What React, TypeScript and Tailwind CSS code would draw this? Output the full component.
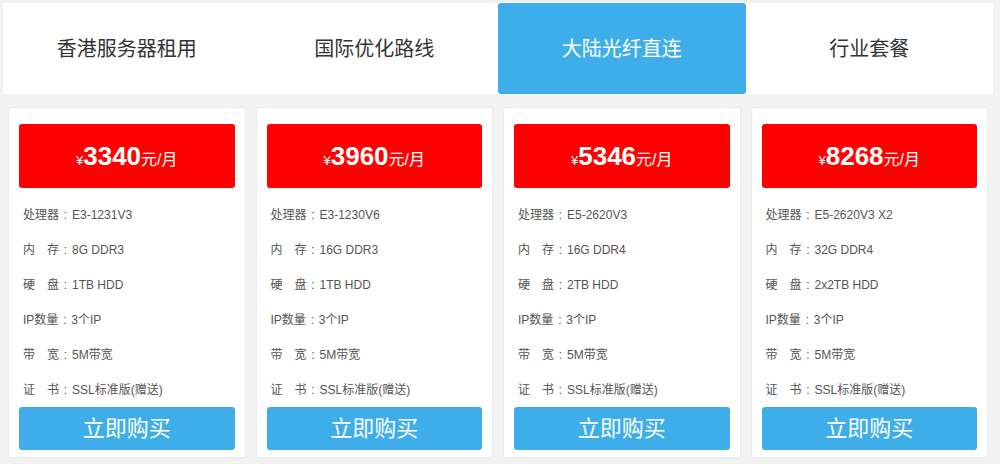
import React from "react";

const tabs = ["香港服务器租用", "国际优化路线", "大陆光纤直连", "行业套餐"];

const plans = [
  { price: "3340", cpu: "E3-1231V3", ram: "8G DDR3", disk: "1TB HDD" },
  { price: "3960", cpu: "E3-1230V6", ram: "16G DDR3", disk: "1TB HDD" },
  { price: "5346", cpu: "E5-2620V3", ram: "16G DDR4", disk: "2TB HDD" },
  { price: "8268", cpu: "E5-2620V3 X2", ram: "32G DDR4", disk: "2x2TB HDD" },
];

const font = {
  fontFamily: '"Liberation Sans", "Noto Sans CJK SC", sans-serif',
};

function Spec({ label, value }: { label: string; value: string }) {
  return (
    <li className="flex h-[35px] items-center pl-[4px]">
      <span>{label}</span>
      <span className="w-[13px] text-center">:</span>
      <span>{value}</span>
    </li>
  );
}

export default function App() {
  return (
    <div className="h-[464px] w-[1000px] overflow-hidden bg-[#f2f2f2] pt-[3px]" style={font}>
      {/* Tabs */}
      <div className="mx-[3px] grid h-[91px] w-[990px] grid-cols-4 bg-white">
        {tabs.map((t, i) => (
          <div
            key={t}
            className={
              i === 2
                ? "flex items-center justify-center rounded-[3px] bg-[#3eaeea] text-[20px] text-white"
                : "flex items-center justify-center text-[20px] text-[#333]"
            }
          >
            {t}
          </div>
        ))}
      </div>

      {/* Plans */}
      <div className="mx-[3px] mt-[13px] grid w-[990px] grid-cols-4">
        {plans.map((p) => (
          <div key={p.price} className="px-[5px]">
            <div className="rounded-[3px] border border-[#ebebeb] bg-white px-[10px] pt-[16px] pb-[7px]">
              <div className="flex h-[64px] items-center justify-center rounded-[3px] bg-[#ff0000] text-white">
                <div className="flex items-baseline">
                  <span className="text-[13px]">¥</span>
                  <span className="text-[26px] font-bold">{p.price}</span>
                  <span className="text-[16px]">元/月</span>
                </div>
              </div>

              <ul className="mt-[9px] text-[12px] text-[#555]">
                <Spec label="处理器" value={p.cpu} />
                <Spec label="内　存" value={p.ram} />
                <Spec label="硬　盘" value={p.disk} />
                <Spec label="IP数量" value="3个IP" />
                <Spec label="带　宽" value="5M带宽" />
                <Spec label="证　书" value="SSL标准版(赠送)" />
              </ul>

              <button className="flex h-[43px] w-full items-center justify-center rounded-[3px] bg-[#3eaeea] text-[22px] text-white">
                立即购买
              </button>
            </div>
          </div>
        ))}
      </div>
    </div>
  );
}
